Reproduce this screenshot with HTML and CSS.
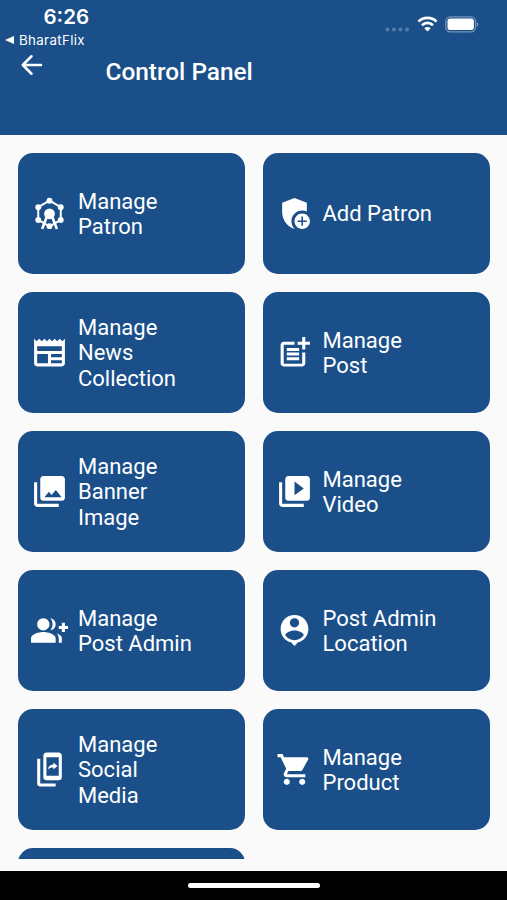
FILE: index.html
```html
<!DOCTYPE html>
<html lang="en">

<head>
    <meta charset="UTF-8" />
    <meta name="viewport" content="width=device-width, initial-scale=1.0" />
    <title>Control Panel</title>
    <link rel="stylesheet" href="styles.css">
</head>

<body>
    <header class="header">
        <div class="status-bar">
            <div class="status-left">
                <div class="time">6:26</div>
                <div class="back-app">
                    <svg width="9" height="8" viewBox="0 0 9 8"><path d="M0 4l9-4v8z" /></svg>
                    <span>BharatFlix</span>
                </div>
            </div>
            <div class="status-right">
                <svg class="signal" width="25" height="5" viewBox="0 0 25 5">
                    <circle cx="2.5" cy="2.5" r="2" />
                    <circle cx="9" cy="2.5" r="2" />
                    <circle cx="15.5" cy="2.5" r="2" />
                    <circle cx="22" cy="2.5" r="2" />
                </svg>
                <svg class="wifi" width="21" height="16" viewBox="0 0 21 16">
                    <path class="wifi-arc" d="M1.5 5.6a12.8 12.8 0 0 1 18 0M5 9.2a7.9 7.9 0 0 1 11 0" />
                    <path d="M10.500 15.600l-3.200-3.300a4.600 4.600 0 0 1 6.400 0z" />
                </svg>
                <svg width="34" height="17" viewBox="0 0 34 17">
                    <rect class="battery-case" x="0.800" y="0.800" width="29.800" height="15" rx="4.500" />
                    <rect x="2.500" y="2.500" width="26.400" height="11.600" rx="2.800" />
                    <path class="battery-tip" d="M31.800 5.700q3 2.600 0 5.200z" />
                </svg>
            </div>
        </div>
        <div class="title-bar">
            <svg class="arrow" width="30" height="30" viewBox="0 0 24 24">
                <path d="M19.200 12H4.800M11.600 5L4.600 12l7 7" />
            </svg>
            <h1>Control Panel</h1>
        </div>
    </header>

    <main class="grid">
        <a class="card">
            <svg class="icon" viewBox="0 0 24 24">
                <path class="wheel" d="M12 3.700l7.300 4.200v8.300L12 20.400l-7.300-4.200V7.900z" />
                <path class="legs" d="M7.200 22l3.500-9M16.800 22l-3.500-9" />
                <circle cx="12" cy="3.700" r="1.900" />
                <circle cx="19.300" cy="7.900" r="1.900" />
                <circle cx="4.700" cy="7.900" r="1.900" />
                <circle cx="19.300" cy="16.200" r="1.900" />
                <circle cx="4.700" cy="16.200" r="1.900" />
                <circle cx="12" cy="20.200" r="1.900" />
                <circle cx="12" cy="12.200" r="3.500" />
            </svg>
            <span>Manage<br>Patron</span>
        </a>
        <a class="card">
            <svg class="icon" viewBox="0 0 24 24">
                <path d="M10 17c0-3.870 3.130-7 7-7 1.070 0 2.110.25 3 .69V5l-8-3-8 3v6.090c0 5.050 3.410 9.760 8 10.910.03-.01.05-.02.08-.02C10.800 20.710 10 18.950 10 17z" />
                <path d="M17 12c-2.760 0-5 2.240-5 5s2.240 5 5 5 5-2.240 5-5-2.240-5-5-5zm3 5.500h-2.500V20h-1v-2.500H14v-1h2.500V14h1v2.500H20v1z" />
            </svg>
            <span>Add Patron</span>
        </a>
        <a class="card">
            <svg class="icon" viewBox="0 0 24 24">
                <path d="M22 3l-1.670 1.670L18.670 3 17 4.670 15.330 3l-1.660 1.670L12 3l-1.670 1.670L8.670 3 7 4.670 5.330 3 3.670 4.670 2 3v16c0 1.100.9 2 2 2h16c1.100 0 2-.9 2-2V3zM11 19H4v-6h7v6zm9 0h-7v-2h7v2zm0-4h-7v-2h7v2zm0-4H4V8h16v3z" />
            </svg>
            <span>Manage<br>News<br>Collection</span>
        </a>
        <a class="card">
            <svg class="icon" viewBox="0 0 24 24">
                <path d="M17 19.220H5V7h7V5H5c-1.100 0-2 .9-2 2v12c0 1.100.9 2 2 2h12c1.100 0 2-.9 2-2v-7h-2v7.220z" />
                <path d="M19 2h-2v3h-3v2h3v3h2V7h3V5h-3V2zM7 9h8v2H7zM7 12h8v2H7zM7 15h8v2H7z" />
            </svg>
            <span>Manage<br>Post</span>
        </a>
        <a class="card">
            <svg class="icon" viewBox="0 0 24 24">
                <path d="M22 16V4c0-1.100-.9-2-2-2H8c-1.100 0-2 .9-2 2v12c0 1.100.9 2 2 2h12c1.100 0 2-.9 2-2zM8.700 15.700l2.900-3.500 1.700 2.100L16.100 11l3.800 4.700zM2 6v14c0 1.100.9 2 2 2h14v-2H4V6H2z" fill-rule="evenodd" />
            </svg>
            <span>Manage<br>Banner<br>Image</span>
        </a>
        <a class="card">
            <svg class="icon" viewBox="0 0 24 24">
                <path d="M4 6H2v14c0 1.100.9 2 2 2h14v-2H4V6zm16-4H8c-1.100 0-2 .9-2 2v12c0 1.100.9 2 2 2h12c1.100 0 2-.9 2-2V4c0-1.100-.9-2-2-2zm-8 12.500v-9l6 4.500-6 4.500z" />
            </svg>
            <span>Manage<br>Video</span>
        </a>
        <a class="card">
            <svg class="icon" viewBox="0 0 24 24">
                <path d="M22 9V7h-2v2h-2v2h2v2h2v-2h2V9zM8 12c2.210 0 4-1.790 4-4s-1.790-4-4-4-4 1.790-4 4 1.790 4 4 4zM8 13c-2.670 0-8 1.340-8 4v3h16v-3c0-2.660-5.330-4-8-4z" />
                <path d="M12.510 4.050C13.430 5.110 14 6.490 14 8s-.57 2.890-1.490 3.950C14.470 11.700 16 10.040 16 8s-1.530-3.700-3.490-3.950zM16.530 13.830C17.420 14.660 18 15.700 18 17v3h2v-3c0-1.450-1.590-2.510-3.470-3.170z" />
            </svg>
            <span>Manage<br>Post Admin</span>
        </a>
        <a class="card">
            <svg class="icon" viewBox="0 0 24 24">
                <path d="M12 2c-4.970 0-9 4.030-9 9 0 4.170 2.840 7.670 6.690 8.690L12 22l2.310-2.310C18.160 18.670 21 15.170 21 11c0-4.970-4.030-9-9-9zm0 2c1.660 0 3 1.340 3 3s-1.340 3-3 3-3-1.340-3-3 1.340-3 3-3zm0 14.300c-2.500 0-4.710-1.280-6-3.220.03-1.990 4-3.080 6-3.080 1.990 0 5.970 1.090 6 3.080-1.290 1.940-3.500 3.220-6 3.220z" />
            </svg>
            <span>Post Admin<br>Location</span>
        </a>
        <a class="card">
            <svg class="icon" viewBox="0 0 24 24">
                <path d="M6 5H4v16c0 1.100.9 2 2 2h10v-2H6V5zM18 1h-8c-1.100 0-2 .9-2 2v14c0 1.100.9 2 2 2h8c1.100 0 2-.9 2-2V3c0-1.100-.9-2-2-2zm0 15h-8V4h8v12z" />
                <path d="M11 12c.2-2 1.300-3 3.500-3.200V7.500l2.700 2.300-2.700 2.200v-1.300c-1.500 0-2.500.3-3.500 1.300z" />
            </svg>
            <span>Manage<br>Social<br>Media</span>
        </a>
        <a class="card">
            <svg class="icon" viewBox="0 0 24 24">
                <path d="M7 18c-1.100 0-1.990.9-1.990 2S5.900 22 7 22s2-.9 2-2-.9-2-2-2zM1 2v2h2l3.600 7.590-1.350 2.450c-.16.280-.25.610-.25.960 0 1.100.9 2 2 2h12v-2H7.420c-.14 0-.25-.11-.25-.25l.03-.12.9-1.630h7.450c.75 0 1.410-.41 1.750-1.030l3.580-6.490c.08-.14.12-.31.12-.48 0-.55-.45-1-1-1H5.210l-.94-2H1zm16 16c-1.100 0-1.990.9-1.990 2s.89 2 1.990 2 2-.9 2-2-.9-2-2-2z" />
            </svg>
            <span>Manage<br>Product</span>
        </a>
        <a class="card"></a>
    </main>

    <footer class="home-bar">
        <div class="home-indicator"></div>
    </footer>
</body>

</html>
```
FILE: styles.css
```css
* {
    box-sizing: border-box;
}

body {
    margin: 0;
    height: 900px;
    display: flex;
    flex-direction: column;
    overflow: hidden;
    background: #fafafa;
    font-family: Roboto, "Liberation Sans", sans-serif;
    color: #fff;
}

svg {
    display: block;
    fill: #fff;
    flex-shrink: 0;
}

.header {
    height: 135px;
    flex-shrink: 0;
    background: #1a4f8a;
}

/* status bar */
.status-bar {
    height: 50px;
    display: flex;
    justify-content: space-between;
    padding: 5px 28px 0 5px;
    font-family: Inter, "Liberation Sans", sans-serif;
}

.time {
    padding-left: 38.5px;
    font-size: 20.5px;
    font-weight: 600;
    line-height: 24px;
}

.back-app {
    display: flex;
    align-items: center;
    gap: 5px;
    font-size: 13.3px;
    font-weight: 400;
    letter-spacing: 0.35px;
    line-height: 18px;
    margin-top: 2px;
}

.status-right {
    display: flex;
    align-items: flex-start;
    padding-top: 10.5px;
}

.signal {
    margin: 11px 7px 0 0;
    opacity: 0.25;
}

.wifi {
    margin-right: 7px;
}

.wifi-arc {
    fill: none;
    stroke: #fff;
    stroke-width: 2.7;
}

.battery-case {
    fill: none;
    stroke: #fff;
    stroke-width: 1.3;
    opacity: 0.4;
}

.battery-tip {
    opacity: 0.4;
}

/* title */
.title-bar {
    display: flex;
    padding-left: 17px;
}

.arrow path {
    fill: none;
    stroke: #fff;
    stroke-width: 2;
    stroke-linecap: round;
    stroke-linejoin: round;
}

.title-bar h1 {
    margin: 7px 0 0 58.5px;
    font-size: 24.4px;
    font-weight: 500;
    line-height: 30px;
}

/* cards */
.grid {
    height: 723.5px;
    flex-shrink: 0;
    display: grid;
    grid-template-columns: 1fr 1fr;
    grid-auto-rows: 121.5px;
    gap: 17.5px;
    padding: 17.5px 17.5px 0 18px;
    overflow: hidden;
}

.card {
    display: flex;
    align-items: center;
    gap: 10px;
    padding-left: 13px;
    background: #1a4f8a;
    border-radius: 15px;
    font-size: 22px;
    line-height: 25.6px;
}

.card span {
    padding-top: 2px;
}

.icon {
    width: 37px;
    height: 37px;
}

.wheel {
    fill: none;
    stroke: #fff;
    stroke-width: 1.3;
}

.legs {
    fill: none;
    stroke: #fff;
    stroke-width: 1.7;
}

/* bottom */
.home-bar {
    margin-top: auto;
    height: 29.5px;
    display: flex;
    justify-content: center;
    padding-top: 12px;
    background: #000;
}

.home-indicator {
    width: 132px;
    height: 5px;
    border-radius: 3px;
    background: #fff;
}
```
